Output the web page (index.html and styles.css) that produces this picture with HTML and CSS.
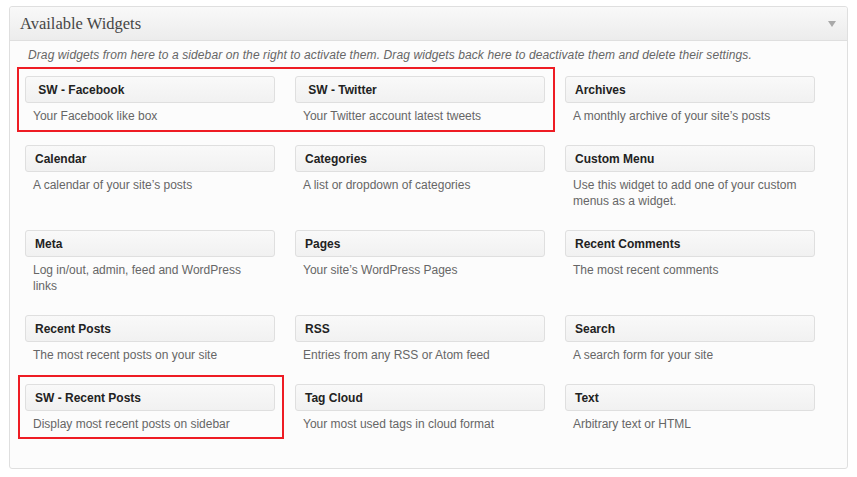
FILE: index.html
```html
<!DOCTYPE html>
<html>
<head>
<meta charset="utf-8">
<link rel="stylesheet" href="styles.css">
</head>
<body>
<div class="panel">
  <div class="panel-head">
    <h3 class="panel-title">Available Widgets</h3>
    <span class="toggle"></span>
  </div>
  <div class="panel-body">
    <p class="intro">Drag widgets from here to a sidebar on the right to activate them. Drag widgets back here to deactivate them and delete their settings.</p>
    <div class="grid">
      <div class="widget"><div class="w-title">&nbsp;SW - Facebook</div><div class="w-desc">Your Facebook like box</div></div>
      <div class="widget"><div class="w-title">&nbsp;SW - Twitter</div><div class="w-desc">Your Twitter account latest tweets</div></div>
      <div class="widget"><div class="w-title">Archives</div><div class="w-desc">A monthly archive of your site’s posts</div></div>

      <div class="widget"><div class="w-title">Calendar</div><div class="w-desc">A calendar of your site’s posts</div></div>
      <div class="widget"><div class="w-title">Categories</div><div class="w-desc">A list or dropdown of categories</div></div>
      <div class="widget"><div class="w-title">Custom Menu</div><div class="w-desc">Use this widget to add one of your custom menus as a widget.</div></div>

      <div class="widget"><div class="w-title">Meta</div><div class="w-desc">Log in/out, admin, feed and WordPress links</div></div>
      <div class="widget"><div class="w-title">Pages</div><div class="w-desc">Your site’s WordPress Pages</div></div>
      <div class="widget"><div class="w-title">Recent Comments</div><div class="w-desc">The most recent comments</div></div>

      <div class="widget"><div class="w-title">Recent Posts</div><div class="w-desc">The most recent posts on your site</div></div>
      <div class="widget"><div class="w-title">RSS</div><div class="w-desc">Entries from any RSS or Atom feed</div></div>
      <div class="widget"><div class="w-title">Search</div><div class="w-desc">A search form for your site</div></div>

      <div class="widget"><div class="w-title">SW - Recent Posts</div><div class="w-desc">Display most recent posts on sidebar</div></div>
      <div class="widget"><div class="w-title">Tag Cloud</div><div class="w-desc">Your most used tags in cloud format</div></div>
      <div class="widget"><div class="w-title">Text</div><div class="w-desc">Arbitrary text or HTML</div></div>
    </div>
  </div>
  <div class="mark mark-top"></div>
  <div class="mark mark-bottom"></div>
</div>
</body>
</html>
```

FILE: styles.css
```css
html, body {
  margin: 0;
  padding: 0;
  background: #ffffff;
}
body {
  font-family: "Liberation Sans", Arial, sans-serif;
  font-size: 12px;
}
.panel {
  position: relative;
  margin: 6px 0 0 9px;
  width: 837px;
  border: 1px solid #dfdfdf;
  border-radius: 3px;
  background: #fcfcfc;
}
.panel-head {
  height: 33px;
  display: flex;
  align-items: center;
  justify-content: space-between;
  padding: 0 10px 0 10px;
  border-bottom: 1px solid #dfdfdf;
  background: linear-gradient(to bottom, #f9f9f9, #ececec);
  border-radius: 3px 3px 0 0;
}
.panel-title {
  margin: 0;
  font-family: "Liberation Serif", Georgia, serif;
  font-weight: normal;
  font-size: 16.5px;
  color: #464646;
  padding-top: 1px;
}
.toggle {
  width: 0;
  height: 0;
  border-left: 4px solid transparent;
  border-right: 4px solid transparent;
  border-top: 6px solid #a9a9a9;
  margin-right: 1px;
  margin-top: 1px;
}
.panel-body {
  padding: 6px 15px 36px 15px;
}
.intro {
  margin: 0 0 13px 3px;
  font-style: italic;
  color: #666;
  line-height: 16px;
  letter-spacing: 0.1px;
}
.grid {
  display: grid;
  grid-template-columns: repeat(3, 250px);
  column-gap: 20px;
  row-gap: 21px;
}
.w-title {
  height: 24px;
  line-height: 25px;
  padding-top: 1px;
  border: 1px solid #dfdfdf;
  border-radius: 3px;
  background: linear-gradient(to bottom, #f9f9f9, #f1f1f1);
  padding-left: 9px;
  padding-right: 9px;
  font-weight: bold;
  color: #222;
  overflow: hidden;
}
.w-desc {
  margin-top: 5px;
  padding: 0 8px;
  line-height: 16px;
  color: #666;
}
.mark {
  position: absolute;
  border: 2px solid #ee1c24;
  box-sizing: border-box;
}
.mark-top {
  left: 7px;
  top: 60px;
  width: 538px;
  height: 65px;
}
.mark-bottom {
  left: 8px;
  top: 368px;
  width: 266px;
  height: 64px;
}
```
